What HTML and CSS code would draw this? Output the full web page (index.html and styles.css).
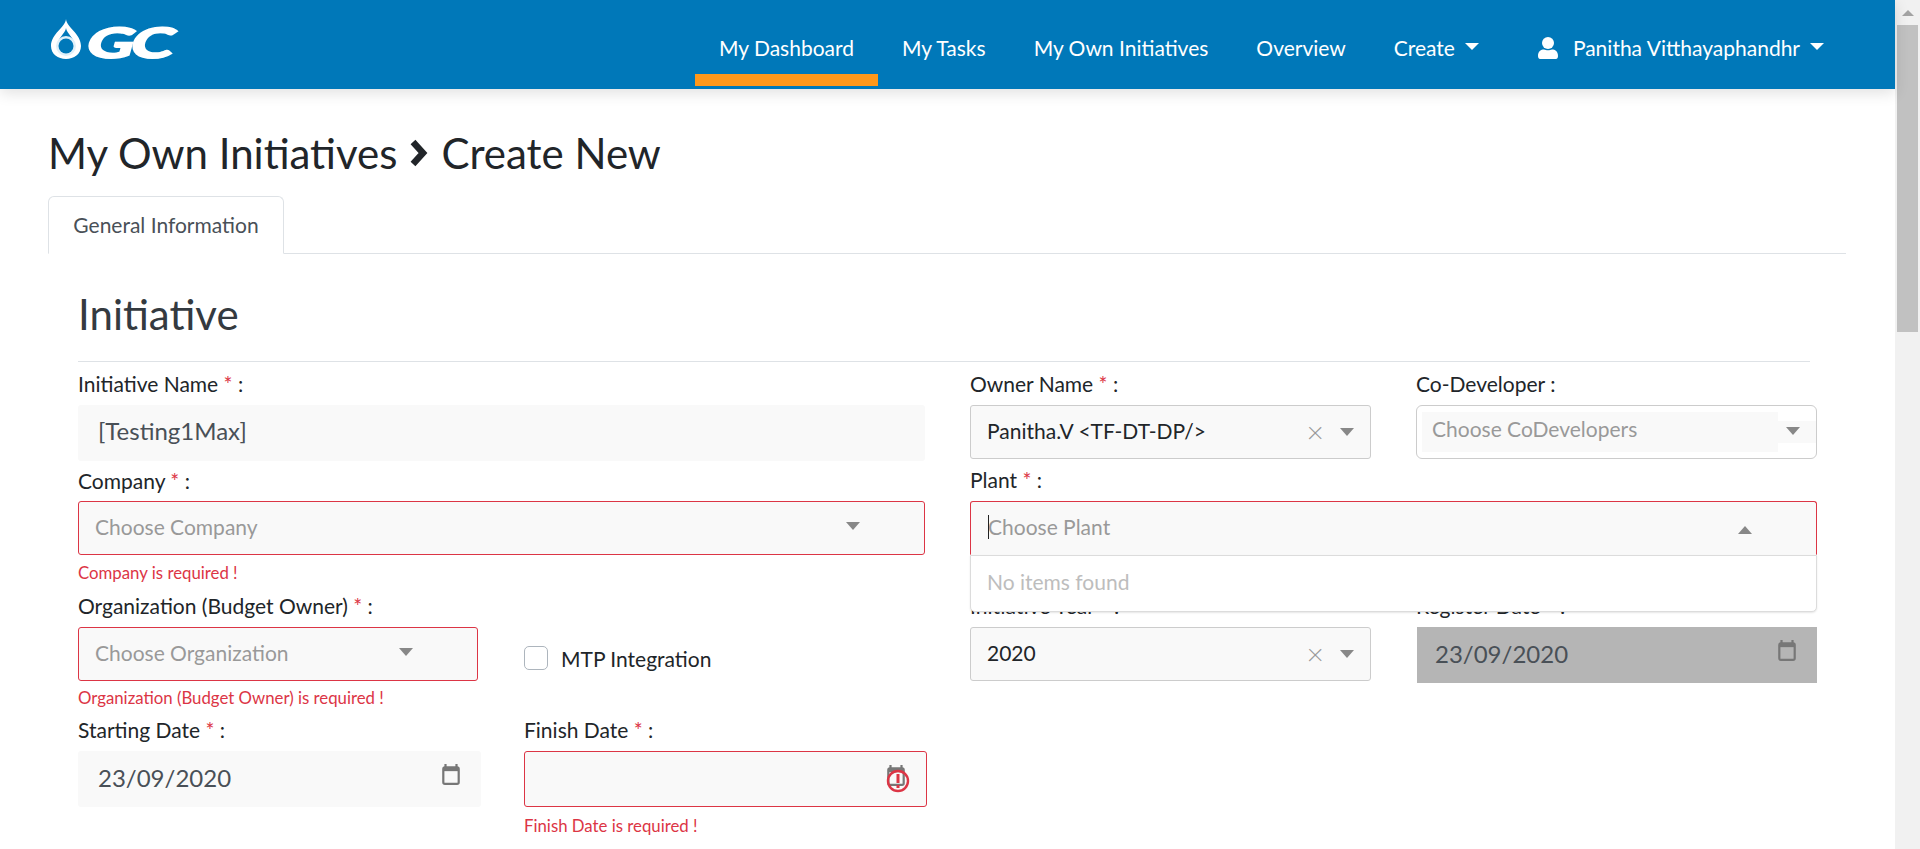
FILE: index.html
```html
<!DOCTYPE html>
<html lang="en">
<head>
    <meta charset="UTF-8">
    <meta name="viewport" content="width=device-width, initial-scale=1.0">
    <title>My Own Initiatives - Create New</title>
    <link rel="stylesheet" href="styles.css">
</head>
<body>
    <div class="window">
        <div class="page">
            <nav class="navbar">
                <a class="brand" href="#">
                    <svg class="brand-drop" viewBox="0 0 30 40" width="30" height="40">
                        <path d="M15 0 C15.500 8 30 15 30 27 C30 35 23 40 15 40 C7 40 0 35 0 27 C0 15 14.500 8 15 0 Z" fill="#fff"/>
                        <path d="M15 9 C15.500 14 24 20 24 27 C24 32 20 36 15 36 C10 36 6 32 6 27 C6 20 14.500 14 15 9 Z" fill="#0078b9"/>
                        <circle cx="15" cy="27" r="10" fill="#dff0f9"/>
                        <circle cx="15" cy="27" r="7.500" fill="#0078b9"/>
                    </svg>
                    <span class="brand-text">GC</span>
                </a>
                <ul class="nav-links">
                    <li class="nav-item active">My Dashboard</li>
                    <li class="nav-item">My Tasks</li>
                    <li class="nav-item">My Own Initiatives</li>
                    <li class="nav-item">Overview</li>
                    <li class="nav-item">Create <span class="caret"></span></li>
                    <li class="nav-item nav-user">
                        <svg viewBox="0 0 20 22" width="20" height="22">
                            <circle cx="10" cy="6" r="6" fill="#fff"/>
                            <path d="M0 19 C0 14 3 12.500 6 12.500 C8 13.500 12 13.500 14 12.500 C17 12.500 20 14 20 19 C20 21 19 22 18 22 L2 22 C1 22 0 21 0 19 Z" fill="#fff"/>
                        </svg>
                        Panitha Vitthayaphandhr <span class="caret"></span>
                    </li>
                </ul>
            </nav>

            <div class="content">
                <h1 class="page-title">
                    My Own Initiatives
                    <svg class="title-chevron" viewBox="0 0 20 28" width="20" height="28">
                        <path d="M4 3 L14 14 L4 25" fill="none" stroke="#212529" stroke-width="6.500"/>
                    </svg>
                    Create New
                </h1>
                <div class="tabs">
                    <div class="tab">General Information</div>
                </div>

                <section class="section">
                    <h2 class="section-title">Initiative</h2>
                    <div class="form-cols">
                        <div class="form-col left-col">
                            <div class="field">
                                <label class="field-label">Initiative Name <span class="req">*</span> :</label>
                                <div class="control plain name-input big-text">[Testing1Max]</div>
                            </div>
                            <div class="field company-field">
                                <label class="field-label">Company <span class="req">*</span> :</label>
                                <div class="control select invalid company-select">
                                    <span class="placeholder">Choose Company</span>
                                    <span class="arrow"></span>
                                </div>
                                <div class="error">Company is required !</div>
                            </div>
                            <div class="field-row org-row">
                                <div class="field half org-field">
                                    <label class="field-label">Organization (Budget Owner) <span class="req">*</span> :</label>
                                    <div class="control select invalid org-select">
                                        <span class="placeholder">Choose Organization</span>
                                        <span class="arrow"></span>
                                    </div>
                                    <div class="error">Organization (Budget Owner) is required !</div>
                                </div>
                                <div class="mtp">
                                    <span class="checkbox"></span>
                                    <span class="mtp-label">MTP Integration</span>
                                </div>
                            </div>
                            <div class="field-row dates-row">
                                <div class="field half">
                                    <label class="field-label">Starting Date <span class="req">*</span> :</label>
                                    <div class="control plain date big-text">
                                        23/09/2020
                                        <svg class="cal" viewBox="0 0 16 20" width="18" height="22">
                                            <path d="M3 0 V4 M13 0 V4" stroke="#777" stroke-width="2"/>
                                            <rect x="1" y="3" width="14" height="15" rx="1.500" fill="none" stroke="#777" stroke-width="2"/>
                                            <path d="M1 5 H15" stroke="#777" stroke-width="3"/>
                                        </svg>
                                    </div>
                                </div>
                                <div class="field half finish-field">
                                    <label class="field-label">Finish Date <span class="req">*</span> :</label>
                                    <div class="control plain date invalid">
                                        <svg class="cal" viewBox="0 0 16 20" width="18" height="22">
                                            <path d="M3 0 V4 M13 0 V4" stroke="#777" stroke-width="2"/>
                                            <rect x="1" y="3" width="14" height="15" rx="1.500" fill="none" stroke="#777" stroke-width="2"/>
                                            <path d="M1 5 H15" stroke="#777" stroke-width="3"/>
                                        </svg>
                                        <svg class="alert" viewBox="0 0 24 24" width="24" height="24">
                                            <circle cx="12" cy="12" r="10" fill="none" stroke="#dc3545" stroke-width="2.400"/>
                                            <path d="M12 5 V14 M12 16 V19" stroke="#dc3545" stroke-width="3"/>
                                        </svg>
                                    </div>
                                    <div class="error">Finish Date is required !</div>
                                </div>
                            </div>
                        </div>

                        <div class="form-col right-col">
                            <div class="field-row">
                                <div class="field half">
                                    <label class="field-label">Owner Name <span class="req">*</span> :</label>
                                    <div class="control select bordered owner-select">
                                        <span class="value">Panitha.V &lt;TF-DT-DP/&gt;</span>
                                        <span class="clear">×</span>
                                        <span class="arrow"></span>
                                    </div>
                                </div>
                                <div class="field half">
                                    <label class="field-label">Co-Developer :</label>
                                    <div class="control bordered codev-select">
                                        <span class="codev-inner"><span class="placeholder">Choose CoDevelopers</span></span>
                                        <span class="codev-arrow"><span class="arrow"></span></span>
                                    </div>
                                </div>
                            </div>
                            <div class="field plant-field">
                                <label class="field-label">Plant <span class="req">*</span> :</label>
                                <div class="control select invalid plant-select">
                                    <span class="cursor"></span>
                                    <span class="placeholder">Choose Plant</span>
                                    <span class="arrow up"></span>
                                </div>
                                <div class="dropdown">No items found</div>
                            </div>
                            <div class="field-row year-row">
                                <div class="field half">
                                    <label class="field-label">Initiative Year <span class="req">*</span> :</label>
                                    <div class="control select bordered year-select">
                                        <span class="value">2020</span>
                                        <span class="clear">×</span>
                                        <span class="arrow"></span>
                                    </div>
                                </div>
                                <div class="field half">
                                    <label class="field-label">Register Date <span class="req">*</span> :</label>
                                    <div class="control date disabled big-text">
                                        23/09/2020
                                        <svg class="cal" viewBox="0 0 16 20" width="18" height="22">
                                            <path d="M3 0 V4 M13 0 V4" stroke="#777" stroke-width="2"/>
                                            <rect x="1" y="3" width="14" height="15" rx="1.500" fill="none" stroke="#777" stroke-width="2"/>
                                            <path d="M1 5 H15" stroke="#777" stroke-width="3"/>
                                        </svg>
                                    </div>
                                </div>
                            </div>
                        </div>
                    </div>
                </section>
            </div>
        </div>

        <div class="scrollbar">
            <span class="scroll-arrow"></span>
            <span class="scroll-thumb"></span>
        </div>
    </div>
</body>
</html>
```

FILE: styles.css
```css
body, html {
    margin: 0;
    padding: 0;
    width: 100%;
    height: 100%;
    overflow: hidden;
}
body {
    font-family: Lato, "Open Sans", sans-serif;
    color: #212529;
    background: #fff;
}
.window {
    display: flex;
    height: 849px;
    overflow: hidden;
}
.page {
    flex: 1;
    min-width: 0;
}

/* top bar */
.navbar {
    display: flex;
    justify-content: space-between;
    height: 89px;
    background-color: #0078b9;
    box-shadow: 0 4px 14px rgba(0, 0, 0, 0.12);
    position: relative;
    z-index: 5;
}
.brand {
    display: flex;
    align-items: flex-start;
    gap: 7px;
    margin: 19px 0 0 51px;
    text-decoration: none;
}
.brand-text {
    display: inline-block;
    margin-top: 2px;
    font-size: 42px;
    line-height: 42px;
    font-weight: 900;
    color: #fff;
    letter-spacing: -2px;
    -webkit-text-stroke: 1.5px #fff;
    transform: skewX(-16deg) scaleX(1.55);
    transform-origin: left center;
}
.nav-links {
    display: flex;
    list-style: none;
    margin: 0;
    padding: 0 71px 0 0;
}
.nav-item {
    position: relative;
    display: flex;
    align-items: center;
    gap: 10px;
    height: 89px;
    box-sizing: border-box;
    padding: 6px 24px 0;
    font-size: 21px;
    color: #fff;
}
.nav-item.active::after {
    content: "";
    position: absolute;
    left: 0;
    right: 0;
    top: 74px;
    height: 12px;
    background-color: #ff981a;
}
.nav-user {
    gap: 0;
    padding-left: 35px;
    padding-right: 0;
}
.nav-user svg {
    margin-right: 15px;
}
.nav-user .caret {
    margin-left: 10px;
}
.caret {
    display: inline-block;
    border-left: 7px solid transparent;
    border-right: 7px solid transparent;
    border-top: 7px solid #fff;
    margin-top: -3px;
}

/* page heading and tab */
.content {
    padding: 40px 49px 0 48px;
}
.page-title {
    display: flex;
    align-items: center;
    gap: 12px;
    margin: 0;
    font-size: 42px;
    line-height: 48px;
    font-weight: 400;
}
.tabs {
    margin-top: 19px;
    height: 58px;
    border-bottom: 1px solid #dee2e6;
    box-sizing: border-box;
}
.tab {
    width: 236px;
    height: 58px;
    box-sizing: border-box;
    border: 1px solid #dee2e6;
    border-bottom: 1px solid #fff;
    border-radius: 6px 6px 0 0;
    background: #fff;
    font-size: 21px;
    line-height: 56px;
    text-align: center;
    color: #495057;
}

/* form */
.section {
    padding: 36px 0 0 30px;
}
.section-title {
    margin: 0;
    padding-bottom: 23px;
    margin-right: 36px;
    border-bottom: 1px solid #dee2e6;
    font-size: 42px;
    line-height: 48px;
    font-weight: 400;
    color: #343a40;
}
.form-cols {
    display: flex;
    gap: 43px;
    padding-top: 10px;
}
.form-col {
    width: 849px;
    flex: none;
}
.field-row {
    display: flex;
    gap: 46px;
}
.right-col .field-row {
    gap: 45px;
}
.half {
    width: 403px;
    flex: none;
}
.right-col .half {
    width: 401px;
}
.field {
    position: relative;
    margin-bottom: 8px;
}
.field-label {
    display: block;
    font-size: 21px;
    line-height: 24px;
    margin-bottom: 9px;
}
.req {
    color: #dc3545;
}
.control {
    position: relative;
    display: flex;
    align-items: center;
    box-sizing: border-box;
    height: 54px;
    background-color: #f9f9f9;
    border-radius: 3px;
    font-size: 21px;
    color: #495057;
}
.big-text {
    font-size: 24px;
    padding-bottom: 3px;
}
.plain {
    height: 56px;
    padding-left: 20px;
}
.name-input {
    width: 847px;
    padding-bottom: 6px;
}
.select {
    padding-left: 16px;
    padding-bottom: 3px;
}
.bordered {
    border: 1px solid #ccc;
    color: #212529;
}
.invalid {
    border: 1px solid #dc3545;
}
.placeholder {
    color: #999;
}
.value {
    flex: 1;
}
.arrow {
    position: absolute;
    right: 64px;
    top: 20px;
    border-left: 7px solid transparent;
    border-right: 7px solid transparent;
    border-top: 8px solid #888;
}
.arrow.up {
    right: 64px;
    border-top: 0;
    border-bottom: 8px solid #888;
    top: 24px;
}
.clear {
    position: absolute;
    right: 46px;
    top: 10px;
    font-size: 30px;
    line-height: 30px;
    color: #999;
    font-weight: 300;
}
.error {
    margin-top: 8px;
    font-size: 16.800px;
    line-height: 18px;
    color: #dc3545;
}
.company-field {
    margin-bottom: 12px;
}
.company-field .field-label {
    margin-bottom: 8px;
}
.company-field .error {
    margin-top: 9px;
}
.finish-field .error {
    margin-top: 10px;
}
.company-select {
    width: 847px;
}
.org-field {
    width: 400px;
    margin-right: 0;
}
.org-select {
    width: 400px;
}
.org-select .arrow {
    right: 64px;
}
.owner-select .arrow, .year-select .arrow {
    right: 16px;
    top: 22px;
}
.owner-select .clear, .year-select .clear {
    right: 46px;
}
.mtp {
    display: flex;
    align-items: center;
    gap: 13px;
    margin: 52px 0 0 0;
    height: 24px;
}
.checkbox {
    width: 22px;
    height: 22px;
    border: 1px solid #adb5bd;
    border-radius: 5px;
    background: #fff;
}
.mtp-label {
    font-size: 21px;
}
.dates-row {
    margin-top: 3px;
    gap: 43px;
}
.cal {
    position: absolute;
    right: 21px;
    top: 13px;
}
.alert {
    position: absolute;
    right: 16px;
    top: 17px;
}
.date.invalid {
    height: 56px;
}

/* right column selects */
.right-col .field-row .field {
    margin-bottom: 0;
}
.codev-select {
    background: #fff;
    border-radius: 6px;
    padding: 6px 0 6px 5px;
    align-items: stretch;
}
.codev-inner {
    display: flex;
    align-items: center;
    width: 356px;
    padding: 0 0 7px 10px;
    box-sizing: border-box;
    background: #f9f9f9;
}
.codev-arrow {
    flex: 1;
    position: relative;
    background: #f9f9f9;
    margin: 9px 0;
}
.codev-arrow .arrow {
    right: 16px;
    top: 6px;
}
.plant-field {
    margin-top: 9px;
    margin-bottom: 39px;
}
.plant-select {
    width: 847px;
    border-bottom-color: transparent;
    border-radius: 3px 3px 0 0;
    padding-left: 17px;
}
.plant-select .arrow {
    right: 64px;
}
.cursor {
    position: absolute;
    left: 17px;
    top: 13px;
    width: 1px;
    height: 24px;
    background: #222;
}
.dropdown {
    position: absolute;
    left: 0;
    top: 87px;
    z-index: 3;
    width: 847px;
    height: 57px;
    box-sizing: border-box;
    padding-left: 16px;
    background: #fff;
    border: 1px solid #dcdcdc;
    border-radius: 0 0 5px 5px;
    box-shadow: 0 1px 2px rgba(0, 0, 0, 0.1);
    font-size: 21px;
    line-height: 52px;
    color: #bdbdbd;
}
.year-row .disabled {
    background-color: #b5b5b5;
    border-radius: 0;
    height: 56px;
    padding-left: 18px;
    margin-left: 1px;
}

/* scrollbar */
.scrollbar {
    flex: none;
    width: 25px;
    margin-left: 0;
    background: #f1f1f1;
    box-sizing: border-box;
    padding: 0 2px;
}
.scroll-arrow {
    display: block;
    width: 0;
    height: 0;
    margin: 10px auto 9px;
    border-left: 6px solid transparent;
    border-right: 6px solid transparent;
    border-bottom: 6px solid #a3a3a3;
}
.scroll-thumb {
    display: block;
    height: 307px;
    background: #c1c1c1;
}
```
